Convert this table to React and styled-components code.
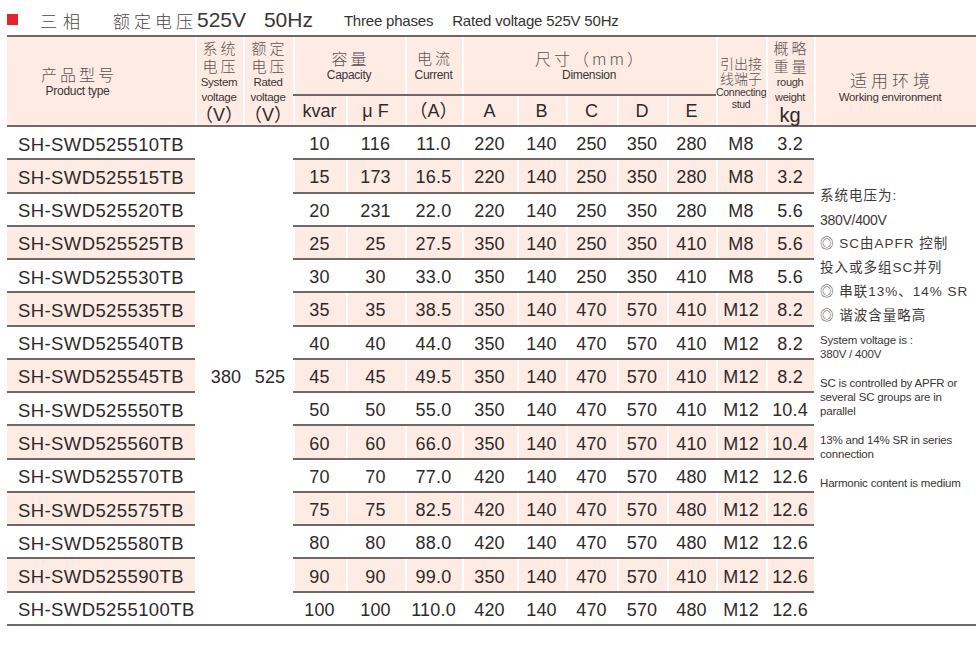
import styled, { createGlobalStyle } from "styled-components";

const GlobalStyle = createGlobalStyle`
  body {
    margin: 0;
    background: #fff;
    color: #2e2a2a;
    font-family: "Liberation Sans", Arial, sans-serif;
  }
`;

const PINK = "#fdebe4";
const LINE = "#6e6867";

const Page = styled.div`
  width: 978px;
  height: 649px;
  padding-left: 7px;
  box-sizing: border-box;
  overflow: hidden;
`;

const TitleBar = styled.div`
  height: 35px;
  display: flex;
  align-items: center;
  padding-top: 5px;
  box-sizing: border-box;
  color: #333;
  white-space: nowrap;
`;

const Marker = styled.span`
  display: block;
  flex: 0 0 11px;
  width: 11px;
  height: 11px;
  background: #e3232b;
  margin: 0 22px 2px 0;
`;

const TitleCn = styled.span`
  font-family: "Noto Sans CJK SC", sans-serif;
  font-weight: 300;
  font-size: 17px;
  color: #4a4545;
  letter-spacing: ${(p) => p.$spread}px;
  margin-right: ${(p) => p.$gap || 0}px;
`;

const TitleNum = styled.span`
  font-size: 21px;
  word-spacing: 12px;
  margin-right: 31px;
  color: #3a3636;
`;

const TitleEn = styled.span`
  font-size: 15px;
  letter-spacing: -0.2px;
  margin-right: ${(p) => p.$gap || 0}px;
`;

const Table = styled.table`
  border-collapse: separate;
  border-spacing: 0;
  table-layout: fixed;
  width: 969px;
`;

const HeadRow = styled.tr`
  height: ${(p) => p.$h}px;
`;

const HeadCell = styled.th`
  background: ${PINK};
  font-weight: normal;
  padding: ${(p) => p.$pad || "0"};
  vertical-align: middle;
  text-align: center;
  border-top: ${(p) => (p.$top ? `2px solid ${LINE}` : "none")};
  border-bottom: 2px solid ${LINE};
  box-shadow: ${(p) => (p.$lead ? "none" : "inset 2px 0 0 #fff")};
  white-space: nowrap;
  color: #3a3535;
`;

const Cn = styled.span`
  display: block;
  font-family: "Noto Sans CJK SC", sans-serif;
  font-weight: 300;
  font-size: ${(p) => p.$size || 15}px;
  line-height: ${(p) => p.$lh || 18}px;
  letter-spacing: ${(p) => (p.$spread === undefined ? 3 : p.$spread)}px;
  padding-left: ${(p) => (p.$spread === undefined ? 3 : p.$spread)}px;
  color: #5a5454;
`;

const En = styled.span`
  display: block;
  font-size: ${(p) => p.$size || 11.5}px;
  line-height: ${(p) => p.$lh || 15}px;
  letter-spacing: -0.3px;
  color: #3a3535;
`;

const Unit = styled.span`
  display: block;
  font-family: ${(p) => (p.$cjk ? `"Liberation Sans", "Noto Sans CJK SC", sans-serif` : `"Liberation Sans", sans-serif`)};
  font-size: ${(p) => p.$size || 18}px;
  line-height: ${(p) => p.$lh || 20}px;
  color: #2e2a2a;
`;

const Row = styled.tr`
  height: 33.27px;
  background: ${(p) => (p.$pink ? PINK : "#fff")};
`;

const Cell = styled.td`
  padding: 4px 0 0;
  font-size: 18px;
  letter-spacing: 0.2px;
  text-align: center;
  vertical-align: middle;
  border-bottom: 2px solid ${LINE};
  box-shadow: inset 2px 0 0 #fff;
  white-space: nowrap;
`;

const ModelCell = styled(Cell)`
  text-align: left;
  padding-left: 11px;
  font-size: 18.5px;
  letter-spacing: 0.4px;
  box-shadow: none;
`;

const MergedCell = styled(Cell)`
  background: #fff;
  padding-left: ${(p) => p.$shift || 0}px;
`;

const EnvCell = styled(Cell)`
  background: #fff;
  text-align: left;
  vertical-align: top;
  padding: 57px 0 0 6px;
  white-space: normal;
  letter-spacing: 0;
`;

const EnvCn = styled.div`
  font-family: "Liberation Sans", "Noto Sans CJK SC", sans-serif;
  font-size: 13.5px;
  line-height: 24px;
  color: #3f3a3a;
  white-space: nowrap;
`;

const EnvCnLine = styled.div`
  font-size: ${(p) => (p.$latin ? 14 : 13.5)}px;
  letter-spacing: ${(p) => (p.$latin ? -0.3 : 1)}px;
`;

const EnvEn = styled.div`
  margin-top: 5px;
  font-size: 11.5px;
  line-height: 14px;
  letter-spacing: -0.2px;
  color: #3a3535;
`;

const EnvPara = styled.p`
  margin: 0 0 15px;
`;

const cols = [188, 48, 50, 53, 59, 57, 55, 49, 51, 50, 49, 50, 48, 162];

const rows = [
  ["SH-SWD525510TB", "10", "116", "11.0", "220", "140", "250", "350", "280", "M8", "3.2"],
  ["SH-SWD525515TB", "15", "173", "16.5", "220", "140", "250", "350", "280", "M8", "3.2"],
  ["SH-SWD525520TB", "20", "231", "22.0", "220", "140", "250", "350", "280", "M8", "5.6"],
  ["SH-SWD525525TB", "25", "25", "27.5", "350", "140", "250", "350", "410", "M8", "5.6"],
  ["SH-SWD525530TB", "30", "30", "33.0", "350", "140", "250", "350", "410", "M8", "5.6"],
  ["SH-SWD525535TB", "35", "35", "38.5", "350", "140", "470", "570", "410", "M12", "8.2"],
  ["SH-SWD525540TB", "40", "40", "44.0", "350", "140", "470", "570", "410", "M12", "8.2"],
  ["SH-SWD525545TB", "45", "45", "49.5", "350", "140", "470", "570", "410", "M12", "8.2"],
  ["SH-SWD525550TB", "50", "50", "55.0", "350", "140", "470", "570", "410", "M12", "10.4"],
  ["SH-SWD525560TB", "60", "60", "66.0", "350", "140", "470", "570", "410", "M12", "10.4"],
  ["SH-SWD525570TB", "70", "70", "77.0", "420", "140", "470", "570", "480", "M12", "12.6"],
  ["SH-SWD525575TB", "75", "75", "82.5", "420", "140", "470", "570", "480", "M12", "12.6"],
  ["SH-SWD525580TB", "80", "80", "88.0", "420", "140", "470", "570", "480", "M12", "12.6"],
  ["SH-SWD525590TB", "90", "90", "99.0", "350", "140", "470", "570", "410", "M12", "12.6"],
  ["SH-SWD5255100TB", "100", "100", "110.0", "420", "140", "470", "570", "480", "M12", "12.6"],
];

function EnvNotes() {
  return (
    <>
      <EnvCn>
        <EnvCnLine>系统电压为:</EnvCnLine>
        <EnvCnLine $latin>380V/400V</EnvCnLine>
        <EnvCnLine>◎ SC由APFR 控制</EnvCnLine>
        <EnvCnLine>投入或多组SC并列</EnvCnLine>
        <EnvCnLine>◎ 串联13%、14% SR</EnvCnLine>
        <EnvCnLine>◎ 谐波含量略高</EnvCnLine>
      </EnvCn>
      <EnvEn>
        <EnvPara>System voltage is :<br />380V / 400V</EnvPara>
        <EnvPara>SC is controlled by APFR or<br />several SC groups are in<br />parallel</EnvPara>
        <EnvPara>13% and 14% SR in series<br />connection</EnvPara>
        <EnvPara>Harmonic content is medium</EnvPara>
      </EnvEn>
    </>
  );
}

export default function App() {
  return (
    <Page>
      <GlobalStyle />
      <TitleBar>
        <Marker />
        <TitleCn $spread={6} $gap={27}>三相</TitleCn>
        <TitleCn $spread={4}>额定电压</TitleCn>
        <TitleNum>525V 50Hz</TitleNum>
        <TitleEn $gap={19}>Three phases</TitleEn>
        <TitleEn>Rated voltage 525V 50Hz</TitleEn>
      </TitleBar>

      <Table>
        <colgroup>
          {cols.map((w, i) => (
            <col key={i} style={{ width: w }} />
          ))}
        </colgroup>
        <thead>
          <HeadRow $h={61}>
            <HeadCell rowSpan={2} $top $lead $pad="1px 47px 0 0">
              <Cn $size={16} $lh={20}>产品型号</Cn>
              <En $size={12}>Product type</En>
            </HeadCell>
            <HeadCell rowSpan={2} $top $pad="2px 0 0">
              <Cn>系统</Cn>
              <Cn>电压</Cn>
              <En>System</En>
              <En>voltage</En>
              <Unit $cjk>（V）</Unit>
            </HeadCell>
            <HeadCell rowSpan={2} $top $pad="2px 0 0">
              <Cn>额定</Cn>
              <Cn>电压</Cn>
              <En>Rated</En>
              <En>voltage</En>
              <Unit $cjk>（V）</Unit>
            </HeadCell>
            <HeadCell colSpan={2} $top>
              <Cn $size={16} $lh={20}>容量</Cn>
              <En $size={12}>Capacity</En>
            </HeadCell>
            <HeadCell $top>
              <Cn $lh={20}>电流</Cn>
              <En $size={12}>Current</En>
            </HeadCell>
            <HeadCell colSpan={5} $top>
              <Cn $size={16} $lh={20}>尺寸（mm）</Cn>
              <En $size={12}>Dimension</En>
            </HeadCell>
            <HeadCell rowSpan={2} $top $pad="4px 0 0">
              <Cn $size={14} $lh={15} $spread={0}>引出接</Cn>
              <Cn $size={14} $lh={15} $spread={0}>线端子</Cn>
              <En $size={10.5} $lh={12}>Connecting</En>
              <En $size={10.5} $lh={12}>stud</En>
            </HeadCell>
            <HeadCell rowSpan={2} $top $pad="2px 0 0">
              <Cn>概略</Cn>
              <Cn>重量</Cn>
              <En $size={11}>rough</En>
              <En $size={11}>weight</En>
              <Unit $size={20}>kg</Unit>
            </HeadCell>
            <HeadCell rowSpan={2} $top $pad="12px 10px 0 0">
              <Cn $size={17} $lh={20} $spread={4}>适用环境</Cn>
              <En $size={11.5}>Working environment</En>
            </HeadCell>
          </HeadRow>
          <HeadRow $h={31}>
            <HeadCell><Unit>kvar</Unit></HeadCell>
            <HeadCell><Unit>μ F</Unit></HeadCell>
            <HeadCell><Unit $cjk>（A）</Unit></HeadCell>
            <HeadCell><Unit>A</Unit></HeadCell>
            <HeadCell><Unit>B</Unit></HeadCell>
            <HeadCell><Unit>C</Unit></HeadCell>
            <HeadCell><Unit>D</Unit></HeadCell>
            <HeadCell><Unit>E</Unit></HeadCell>
          </HeadRow>
        </thead>
        <tbody>
          {rows.map(([model, ...vals], i) => (
            <Row key={model} $pink={i % 2 === 1}>
              <ModelCell>{model}</ModelCell>
              {i === 0 && (
                <>
                  <MergedCell rowSpan={rows.length} $shift={14}>380</MergedCell>
                  <MergedCell rowSpan={rows.length} $shift={4}>525</MergedCell>
                </>
              )}
              {vals.map((v, j) => (
                <Cell key={j}>{v}</Cell>
              ))}
              {i === 0 && (
                <EnvCell rowSpan={rows.length}>
                  <EnvNotes />
                </EnvCell>
              )}
            </Row>
          ))}
        </tbody>
      </Table>
    </Page>
  );
}
